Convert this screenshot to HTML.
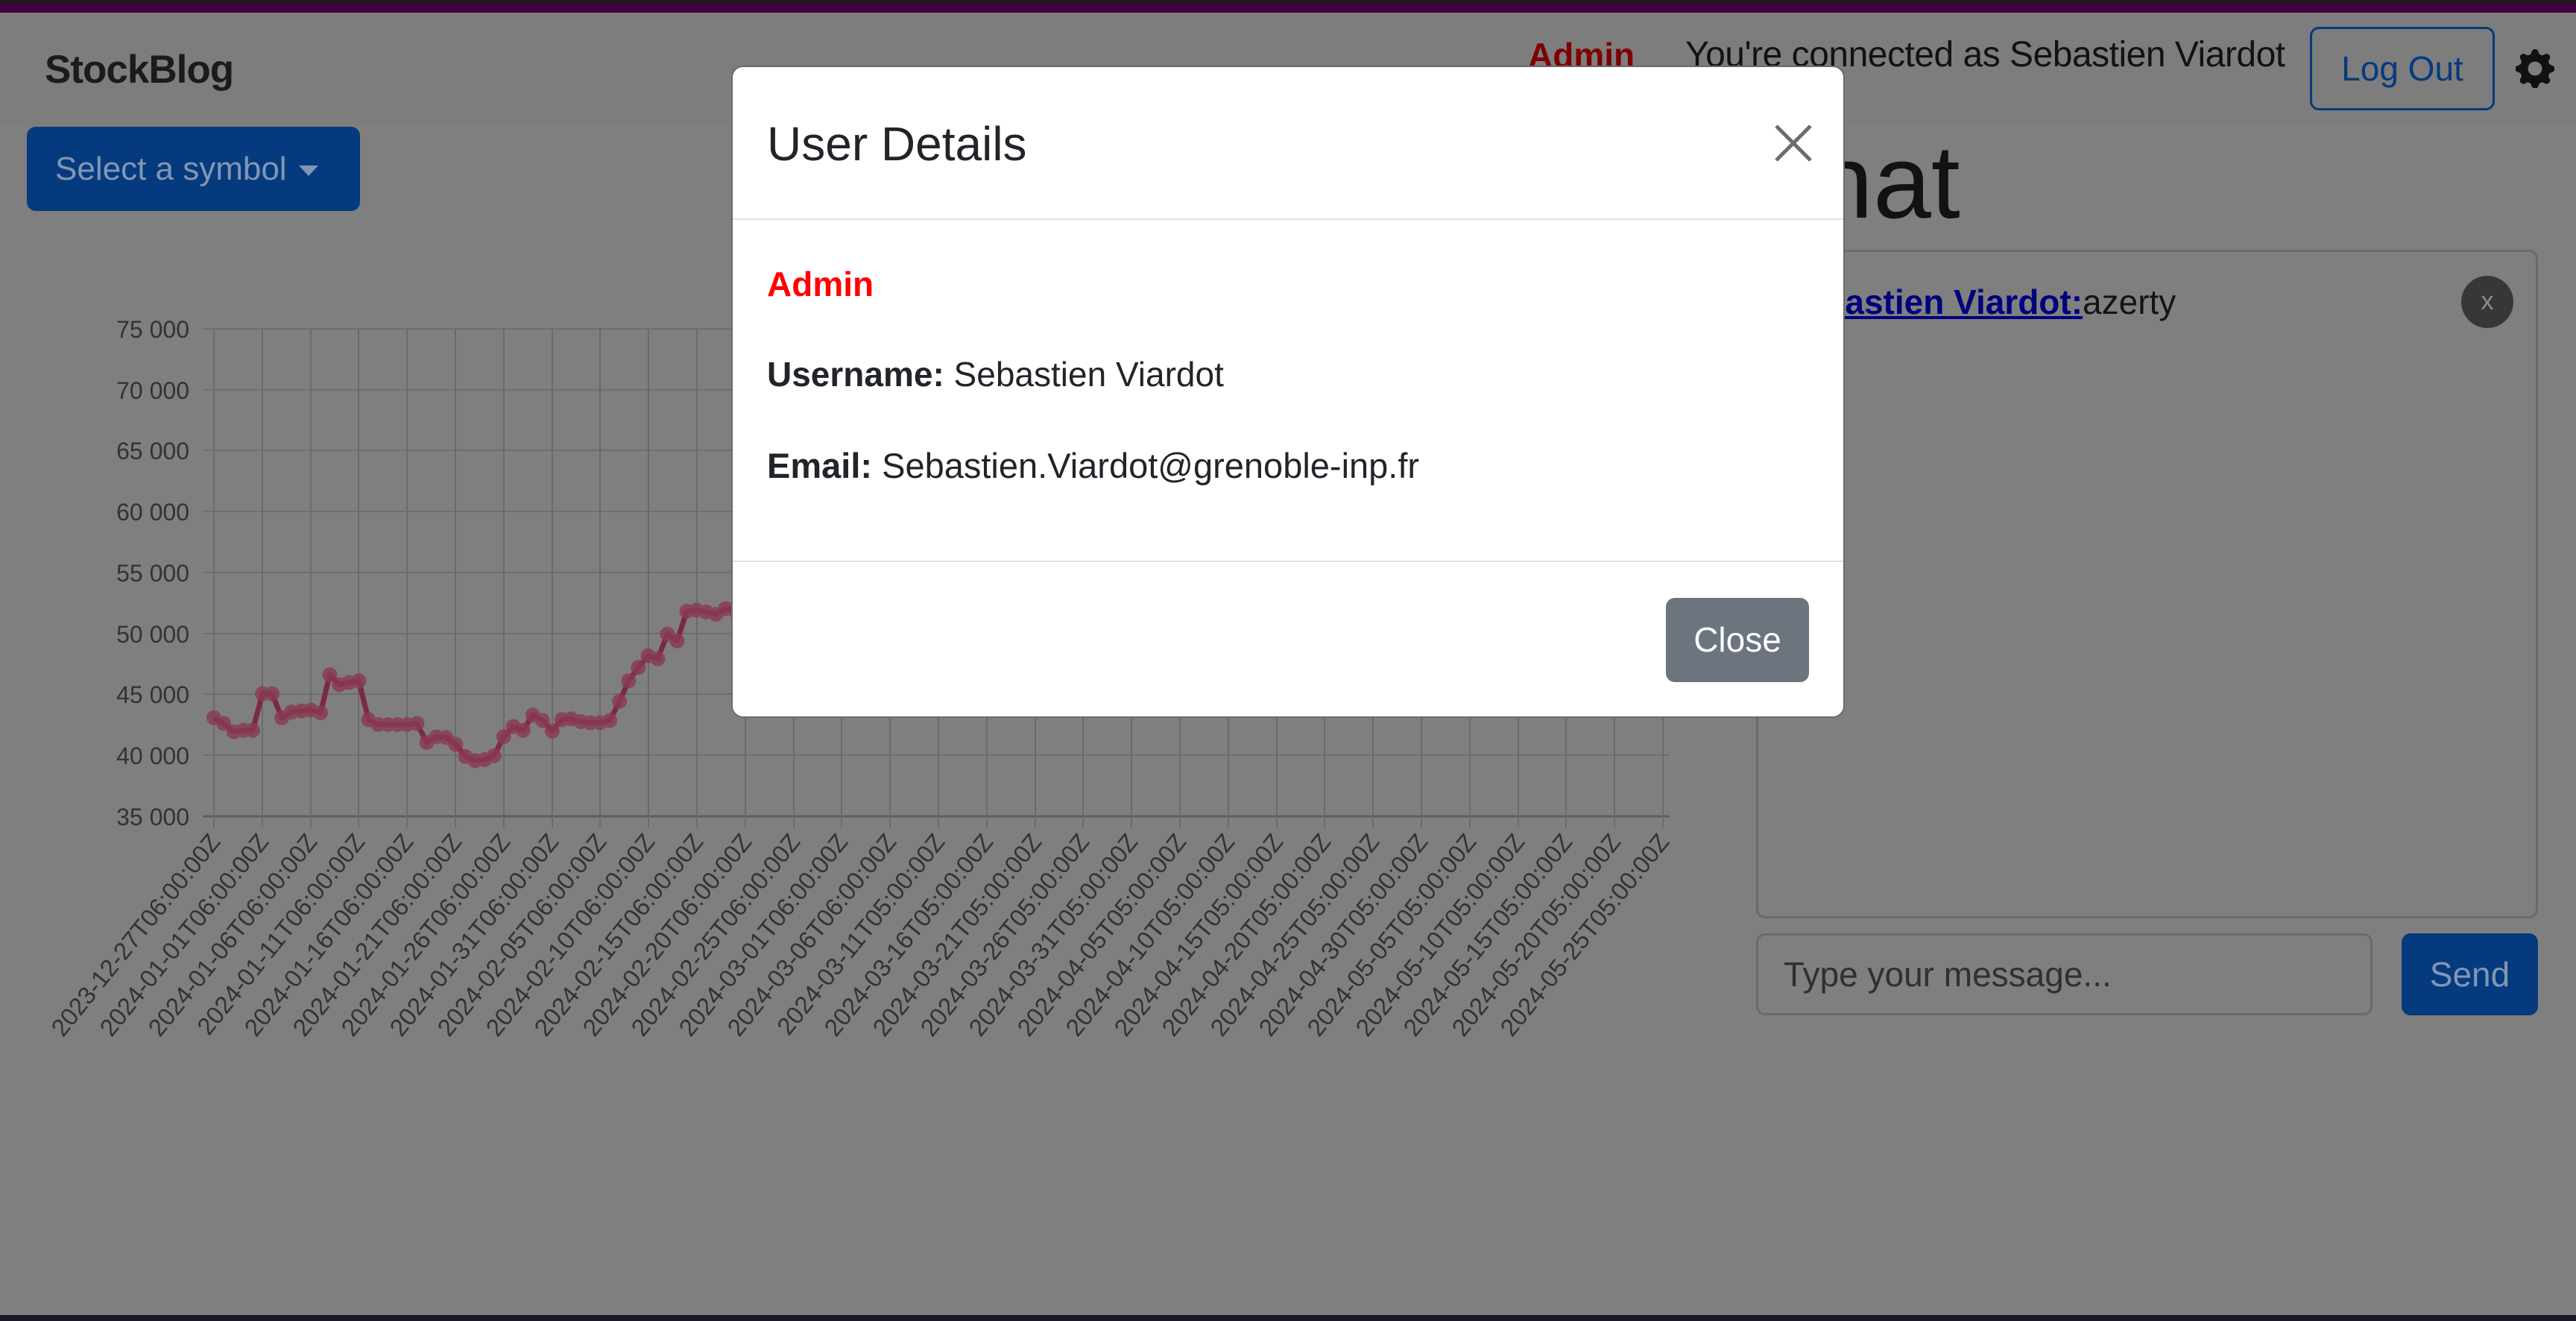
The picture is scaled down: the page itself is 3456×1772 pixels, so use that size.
<!DOCTYPE html>
<html><head><meta charset="utf-8"><style>
*{box-sizing:border-box;margin:0;padding:0}
body{width:3456px;height:1772px;overflow:hidden;background:#7f7f7f;font-family:"Liberation Sans",sans-serif;position:relative;color:#101213}
.abs{position:absolute}
</style></head><body>
<div class="abs" style="left:0;top:0;width:3456px;height:4px;background:#1a1a1a"></div>
<div class="abs" style="left:0;top:4px;width:3456px;height:13px;background:#400040"></div>
<div class="abs" style="left:0;top:17px;width:3456px;height:150px;background:#7d7d7d"></div>
<div class="abs" style="left:0;top:1764px;width:3456px;height:8px;background:#1a1a2a"></div>

<div class="abs" style="left:60px;top:63px;font-size:53px;font-weight:bold;color:#1b1b1b;letter-spacing:-1px">StockBlog</div>

<div class="abs" style="left:36px;top:170px;width:447px;height:113px;background:#063a7e;border-radius:12px;color:#8296b4;font-size:44px;line-height:113px;padding-left:38px">Select a symbol <span style="display:inline-block;width:0;height:0;border-left:13px solid transparent;border-right:13px solid transparent;border-top:14px solid #8296b4;vertical-align:middle;margin-left:4px"></span></div>

<div class="abs" style="left:2050px;top:47px;font-size:46px;font-weight:bold;color:#7f0000">Admin</div>
<div class="abs" style="left:2261px;top:46px;font-size:48px;color:#121212;letter-spacing:-0.5px">You're connected as Sebastien Viardot</div>
<div class="abs" style="left:3099px;top:36px;width:248px;height:112px;border:3px solid #063a7e;border-radius:12px;color:#063a7e;font-size:46px;line-height:106px;text-align:center">Log Out</div>
<svg class="abs" style="left:3375px;top:66px" width="52" height="52" viewBox="0 0 16 16"><path fill="#111" d="M9.4 1.1c-.4-1.5-2.4-1.5-2.8 0l-.1.3a1.5 1.5 0 0 1-2.2.9l-.3-.2c-1.3-.8-2.8.7-2 2l.2.3a1.5 1.5 0 0 1-.9 2.2l-.3.1c-1.5.4-1.5 2.4 0 2.8l.3.1a1.5 1.5 0 0 1 .9 2.2l-.2.3c-.8 1.300.7 2.8 2 2l.3-.2a1.5 1.5 0 0 1 2.2.9l.1.3c.4 1.5 2.4 1.5 2.8 0l.1-.3a1.5 1.5 0 0 1 2.2-.9l.3.2c1.3.8 2.8-.7 2-2l-.2-.3a1.5 1.5 0 0 1 .9-2.2l.3-.1c1.5-.4 1.5-2.4 0-2.8l-.3-.1a1.5 1.5 0 0 1-.9-2.2l.2-.3c.8-1.3-.7-2.8-2-2l-.3.2a1.5 1.5 0 0 1-2.2-.9zM8 10.9a2.9 2.9 0 1 1 0-5.8 2.9 2.9 0 0 1 0 5.8z"/></svg>

<div class="abs" style="left:2334px;top:174px;font-size:140px;color:#121212;line-height:140px">Chat</div>
<div class="abs" style="left:2356px;top:335px;width:1049px;height:897px;border:3px solid #6a6a6a;border-radius:12px"></div>
<div class="abs" style="left:2391px;top:378px;font-size:46px;color:#141414"><span style="font-weight:bold;color:#00007f;text-decoration:underline">Sebastien Viardot:</span>azerty</div>
<div class="abs" style="left:3302px;top:370px;width:70px;height:70px;border-radius:50%;background:#353739;color:#8a8a8a;font-size:34px;text-align:center;line-height:68px">x</div>
<div class="abs" style="left:2356px;top:1252px;width:827px;height:110px;border:3px solid #6a6a6a;border-radius:12px;font-size:46px;color:#303030;line-height:104px;padding-left:34px">Type your message...</div>
<div class="abs" style="left:3222px;top:1252px;width:183px;height:110px;background:#063a7e;border-radius:12px;color:#8296b4;font-size:46px;line-height:110px;text-align:center">Send</div>

<svg class="abs" style="left:0;top:0" width="2300" height="1500">
<g stroke="#6e6e6e" stroke-width="2">
<line x1="272" y1="441" x2="2240" y2="441"/><line x1="272" y1="523" x2="2240" y2="523"/><line x1="272" y1="604" x2="2240" y2="604"/><line x1="272" y1="686" x2="2240" y2="686"/><line x1="272" y1="768" x2="2240" y2="768"/><line x1="272" y1="850" x2="2240" y2="850"/><line x1="272" y1="931" x2="2240" y2="931"/><line x1="272" y1="1013" x2="2240" y2="1013"/>
</g>
<line x1="272" y1="1095" x2="2240" y2="1095" stroke="#5e5e5e" stroke-width="3"/>
<g font-size="32" fill="#333" text-anchor="end">
<text x="254" y="453">75 000</text><text x="254" y="535">70 000</text><text x="254" y="616">65 000</text><text x="254" y="698">60 000</text><text x="254" y="780">55 000</text><text x="254" y="862">50 000</text><text x="254" y="943">45 000</text><text x="254" y="1025">40 000</text><text x="254" y="1107">35 000</text>
</g>
<g stroke="#6a6a6a" stroke-width="2">
<line x1="287" y1="441" x2="287" y2="1110"/><line x1="352" y1="441" x2="352" y2="1110"/><line x1="417" y1="441" x2="417" y2="1110"/><line x1="481" y1="441" x2="481" y2="1110"/><line x1="546" y1="441" x2="546" y2="1110"/><line x1="611" y1="441" x2="611" y2="1110"/><line x1="676" y1="441" x2="676" y2="1110"/><line x1="741" y1="441" x2="741" y2="1110"/><line x1="805" y1="441" x2="805" y2="1110"/><line x1="870" y1="441" x2="870" y2="1110"/><line x1="935" y1="441" x2="935" y2="1110"/><line x1="1000" y1="441" x2="1000" y2="1110"/><line x1="1065" y1="441" x2="1065" y2="1110"/><line x1="1129" y1="441" x2="1129" y2="1110"/><line x1="1194" y1="441" x2="1194" y2="1110"/><line x1="1259" y1="441" x2="1259" y2="1110"/><line x1="1324" y1="441" x2="1324" y2="1110"/><line x1="1389" y1="441" x2="1389" y2="1110"/><line x1="1453" y1="441" x2="1453" y2="1110"/><line x1="1518" y1="441" x2="1518" y2="1110"/><line x1="1583" y1="441" x2="1583" y2="1110"/><line x1="1648" y1="441" x2="1648" y2="1110"/><line x1="1713" y1="441" x2="1713" y2="1110"/><line x1="1777" y1="441" x2="1777" y2="1110"/><line x1="1842" y1="441" x2="1842" y2="1110"/><line x1="1907" y1="441" x2="1907" y2="1110"/><line x1="1972" y1="441" x2="1972" y2="1110"/><line x1="2037" y1="441" x2="2037" y2="1110"/><line x1="2101" y1="441" x2="2101" y2="1110"/><line x1="2166" y1="441" x2="2166" y2="1110"/><line x1="2231" y1="441" x2="2231" y2="1110"/>
</g>
<g font-size="33" fill="#333" text-anchor="end">
<text transform="translate(297,1130) rotate(-51)">2023-12-27T06:00:00Z</text>
<text transform="translate(362,1130) rotate(-51)">2024-01-01T06:00:00Z</text>
<text transform="translate(427,1130) rotate(-51)">2024-01-06T06:00:00Z</text>
<text transform="translate(491,1130) rotate(-51)">2024-01-11T06:00:00Z</text>
<text transform="translate(556,1130) rotate(-51)">2024-01-16T06:00:00Z</text>
<text transform="translate(621,1130) rotate(-51)">2024-01-21T06:00:00Z</text>
<text transform="translate(686,1130) rotate(-51)">2024-01-26T06:00:00Z</text>
<text transform="translate(751,1130) rotate(-51)">2024-01-31T06:00:00Z</text>
<text transform="translate(815,1130) rotate(-51)">2024-02-05T06:00:00Z</text>
<text transform="translate(880,1130) rotate(-51)">2024-02-10T06:00:00Z</text>
<text transform="translate(945,1130) rotate(-51)">2024-02-15T06:00:00Z</text>
<text transform="translate(1010,1130) rotate(-51)">2024-02-20T06:00:00Z</text>
<text transform="translate(1075,1130) rotate(-51)">2024-02-25T06:00:00Z</text>
<text transform="translate(1139,1130) rotate(-51)">2024-03-01T06:00:00Z</text>
<text transform="translate(1204,1130) rotate(-51)">2024-03-06T06:00:00Z</text>
<text transform="translate(1269,1130) rotate(-51)">2024-03-11T05:00:00Z</text>
<text transform="translate(1334,1130) rotate(-51)">2024-03-16T05:00:00Z</text>
<text transform="translate(1399,1130) rotate(-51)">2024-03-21T05:00:00Z</text>
<text transform="translate(1463,1130) rotate(-51)">2024-03-26T05:00:00Z</text>
<text transform="translate(1528,1130) rotate(-51)">2024-03-31T05:00:00Z</text>
<text transform="translate(1593,1130) rotate(-51)">2024-04-05T05:00:00Z</text>
<text transform="translate(1658,1130) rotate(-51)">2024-04-10T05:00:00Z</text>
<text transform="translate(1723,1130) rotate(-51)">2024-04-15T05:00:00Z</text>
<text transform="translate(1787,1130) rotate(-51)">2024-04-20T05:00:00Z</text>
<text transform="translate(1852,1130) rotate(-51)">2024-04-25T05:00:00Z</text>
<text transform="translate(1917,1130) rotate(-51)">2024-04-30T05:00:00Z</text>
<text transform="translate(1982,1130) rotate(-51)">2024-05-05T05:00:00Z</text>
<text transform="translate(2047,1130) rotate(-51)">2024-05-10T05:00:00Z</text>
<text transform="translate(2111,1130) rotate(-51)">2024-05-15T05:00:00Z</text>
<text transform="translate(2176,1130) rotate(-51)">2024-05-20T05:00:00Z</text>
<text transform="translate(2241,1130) rotate(-51)">2024-05-25T05:00:00Z</text>
</g>
</svg>

<svg class="abs" style="left:0;top:700px" width="1200" height="800" viewBox="0 0 1568 1568" preserveAspectRatio="none">
<path fill="none" stroke="#7b2a42" stroke-width="7" vector-effect="non-scaling-stroke" stroke-linejoin="round" d="M375 515L392 530L410 552L427 548L443 548L460 452L477 452L494 515L511 500L528 497L545 495L562 502L578 402L595 428L612 422L629 418L646 520L663 533L680 533L697 533L714 533L731 530L748 580L765 565L782 567L799 585L816 617L833 628L850 625L866 615L883 565L900 538L917 548L934 508L951 522L968 550L985 520L1001 518L1018 525L1035 528L1052 528L1069 522L1086 472L1102 418L1119 383L1136 352L1153 360L1170 295L1187 313L1204 235L1221 232L1238 237L1255 243L1272 228L1289 235L1310 230L1330 230"/>
<path fill="none" stroke="#8a3a52" stroke-width="20" stroke-linecap="round" vector-effect="non-scaling-stroke" opacity="0.8" d="M375 515h0M392 530h0M410 552h0M427 548h0M443 548h0M460 452h0M477 452h0M494 515h0M511 500h0M528 497h0M545 495h0M562 502h0M578 402h0M595 428h0M612 422h0M629 418h0M646 520h0M663 533h0M680 533h0M697 533h0M714 533h0M731 530h0M748 580h0M765 565h0M782 567h0M799 585h0M816 617h0M833 628h0M850 625h0M866 615h0M883 565h0M900 538h0M917 548h0M934 508h0M951 522h0M968 550h0M985 520h0M1001 518h0M1018 525h0M1035 528h0M1052 528h0M1069 522h0M1086 472h0M1102 418h0M1119 383h0M1136 352h0M1153 360h0M1170 295h0M1187 313h0M1204 235h0M1221 232h0M1238 237h0M1255 243h0M1272 228h0M1289 235h0"/>
</svg>

<div class="abs" style="left:981px;top:88px;width:1494px;height:875px;background:#fff;border-radius:16px;border:2px solid #6a6a6a">
  <div class="abs" style="left:46px;top:66px;font-size:64px;color:#212529;line-height:74px">User Details</div>
  <svg class="abs" style="left:1397px;top:76px" width="52" height="52" viewBox="0 0 52 52"><path d="M3 3L49 49M49 3L3 49" stroke="#6c6c6c" stroke-width="5"/></svg>
  <div class="abs" style="left:0;top:203px;width:1490px;height:2px;background:#dee2e6"></div>
  <div class="abs" style="left:46px;top:264px;font-size:46px;font-weight:bold;color:#ff0000">Admin</div>
  <div class="abs" style="left:46px;top:385px;font-size:46px;color:#212529"><b>Username:</b> Sebastien Viardot</div>
  <div class="abs" style="left:46px;top:507px;font-size:47px;color:#212529"><b>Email:</b> Sebastien.Viardot@grenoble-inp.fr</div>
  <div class="abs" style="left:0;top:662px;width:1490px;height:2px;background:#dee2e6"></div>
  <div class="abs" style="left:1252px;top:712px;width:192px;height:113px;background:#6c757d;border-radius:12px;color:#fff;font-size:46px;line-height:113px;text-align:center">Close</div>
</div>
</body></html>
